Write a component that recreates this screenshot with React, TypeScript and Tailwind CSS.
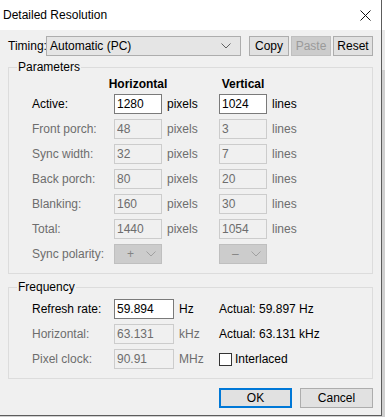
import React from "react";

const font = { fontFamily: '"Liberation Sans", Arial, sans-serif' };

function Chevron({ color = "#606060" }: { color?: string }) {
  return (
    <svg width="10" height="6" viewBox="0 0 10 6" className="shrink-0">
      <path d="M0.5 0.5 L5 5 L9.5 0.5" fill="none" stroke={color} strokeWidth="1" />
    </svg>
  );
}

function Box({ value, w = 48, enabled = false }: { value: string; w?: number; enabled?: boolean }) {
  return (
    <input
      readOnly
      value={value}
      style={{ width: w }}
      className={
        enabled
          ? "h-[20px] border border-[#7a7a7a] bg-white px-[2px] text-[12px] text-black outline-none"
          : "h-[20px] border border-[#cccccc] bg-[#f0f0f0] px-[2px] text-[12px] text-[#6d6d6d] outline-none"
      }
    />
  );
}

function Button({ label, disabled = false, def = false, w = 40 }: { label: string; disabled?: boolean; def?: boolean; w?: number }) {
  let cls = "flex h-[20px] items-center justify-center text-[12px] ";
  if (disabled) cls += "border border-[#bfbfbf] bg-[#cccccc] text-[#9a9a9a]";
  else if (def) cls += "border-2 border-[#0078d7] bg-[#e1e1e1] text-black";
  else cls += "border border-[#adadad] bg-[#e1e1e1] text-black";
  return (
    <div style={{ width: w }} className={cls}>
      {label}
    </div>
  );
}

function Group({ title, children, className = "" }: { title: string; children: React.ReactNode; className?: string }) {
  return (
    <fieldset className={"border border-[#dcdcdc] " + className}>
      <legend className="-ml-[15px] px-[1px] text-[12px] leading-[14px] text-black">{title}</legend>
      {children}
    </fieldset>
  );
}

const params = [
  { label: "Active:", h: "1280", v: "1024", on: true },
  { label: "Front porch:", h: "48", v: "3" },
  { label: "Sync width:", h: "32", v: "7" },
  { label: "Back porch:", h: "80", v: "20" },
  { label: "Blanking:", h: "160", v: "30" },
  { label: "Total:", h: "1440", v: "1054" },
];

export default function App() {
  return (
    <div style={font} className="flex h-[417px] w-[385px] overflow-hidden bg-[#cfcfcf]">
      <div className="flex h-[416px] w-[382px] shrink-0 flex-col border-r border-b border-[#5c5c5c] bg-[#f0f0f0] text-[12px]">
        {/* title bar */}
        <div className="flex h-[30px] items-center justify-between bg-white pl-[3px] pr-[10px]">
          <span className="text-[12px] text-black">Detailed Resolution</span>
          <svg width="11" height="11" viewBox="0 0 11 11">
            <path d="M0.5 0.5 L10.5 10.5 M10.5 0.5 L0.5 10.5" stroke="#111" strokeWidth="1" />
          </svg>
        </div>

        <div className="flex flex-col px-[8px]">
          {/* timing row */}
          <div className="mt-[6px] flex h-[20px] items-center">
            <span className="w-[38px] whitespace-nowrap">Timing:</span>
            <div className="flex h-[20px] w-[195px] items-center justify-between border border-[#adadad] bg-[#e5e5e5] pl-[3px] pr-[9px]">
              <span>Automatic (PC)</span>
              <Chevron />
            </div>
            <div className="ml-[8px] flex gap-[2px]">
              <Button label="Copy" />
              <Button label="Paste" disabled />
              <Button label="Reset" />
            </div>
          </div>

          {/* parameters */}
          <Group title="Parameters" className="mt-[4px] pb-[9px] pl-[23px]">
            <div className="flex h-[20px] items-center">
              <div className="w-[82px]" />
              <div className="flex w-[48px] justify-center whitespace-nowrap font-bold">Horizontal</div>
              <div className="w-[57px]" />
              <div className="flex w-[48px] justify-center whitespace-nowrap font-bold">Vertical</div>
            </div>
            <div className="flex flex-col gap-[5px]">
              {params.map((p) => (
                <div key={p.label} className="flex h-[20px] items-center">
                  <span className={"w-[82px] " + (p.on ? "text-black" : "text-[#6d6d6d]")}>{p.label}</span>
                  <Box value={p.h} enabled={p.on} />
                  <span className={"w-[57px] pl-[5px] " + (p.on ? "text-black" : "text-[#6d6d6d]")}>pixels</span>
                  <Box value={p.v} enabled={p.on} />
                  <span className={"pl-[5px] " + (p.on ? "text-black" : "text-[#6d6d6d]")}>lines</span>
                </div>
              ))}
              <div className="flex h-[20px] items-center">
                <span className="w-[82px] text-[#6d6d6d]">Sync polarity:</span>
                <div className="flex h-[20px] w-[48px] items-center justify-between border border-[#bfbfbf] bg-[#cccccc] pl-[12px] pr-[5px] text-[#838383]">
                  <span>+</span>
                  <Chevron color="#a0a0a0" />
                </div>
                <div className="w-[57px]" />
                <div className="flex h-[20px] w-[48px] items-center justify-between border border-[#bfbfbf] bg-[#cccccc] pl-[12px] pr-[5px] text-[#838383]">
                  <span>–</span>
                  <Chevron color="#a0a0a0" />
                </div>
              </div>
            </div>
          </Group>

          {/* frequency */}
          <Group title="Frequency" className="mt-[6px] pt-[5px] pb-[9px] pl-[23px]">
            <div className="flex flex-col gap-[5px]">
              <div className="flex h-[20px] items-center">
                <span className="w-[82px] text-black">Refresh rate:</span>
                <Box value="59.894" w={60} enabled />
                <span className="w-[45px] pl-[5px] text-black">Hz</span>
                <span className="text-black">Actual: 59.897 Hz</span>
              </div>
              <div className="flex h-[20px] items-center">
                <span className="w-[82px] text-[#6d6d6d]">Horizontal:</span>
                <Box value="63.131" w={60} />
                <span className="w-[45px] pl-[5px] text-[#6d6d6d]">kHz</span>
                <span className="text-black">Actual: 63.131 kHz</span>
              </div>
              <div className="flex h-[20px] items-center">
                <span className="w-[82px] text-[#6d6d6d]">Pixel clock:</span>
                <Box value="90.91" w={60} />
                <span className="w-[45px] pl-[5px] text-[#6d6d6d]">MHz</span>
                <div className="h-[13px] w-[13px] border border-[#333333] bg-white" />
                <span className="pl-[3px] text-black">Interlaced</span>
              </div>
            </div>
          </Group>

          {/* buttons */}
          <div className="mt-[9px] flex justify-end gap-[8px]">
            <Button label="OK" def w={73} />
            <Button label="Cancel" w={73} />
          </div>
        </div>
      </div>
      <div className="flex flex-col">
        <div className="h-[30px] w-[3px] bg-white" />
        <div className="h-[40px] w-[3px] bg-[#e8e8e8]" />
      </div>
    </div>
  );
}
